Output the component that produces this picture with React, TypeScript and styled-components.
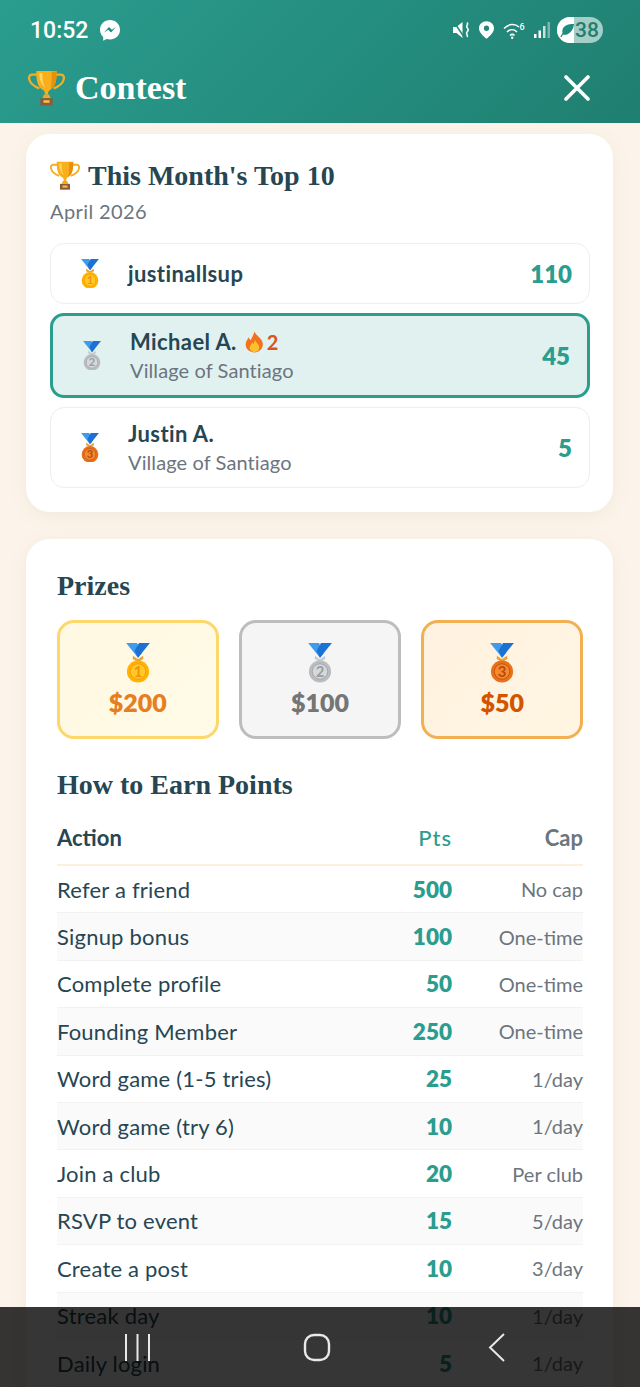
import React from "react";
import styled, { createGlobalStyle } from "styled-components";

const Global = createGlobalStyle`
  html, body { margin: 0; padding: 0; background: #fcf4ea; }
  * { box-sizing: border-box; }
`;
const BODY = `"Lato", "Noto Sans", sans-serif`;
const HEAD = `"Liberation Serif", serif`;

const Page = styled.div`
  position: relative; width: 640px; height: 1387px; overflow: hidden;
  background: #fcf4ea; font-family: ${BODY}; color: #264653;
`;
const Header = styled.header`
  height: 123px; background: linear-gradient(135deg, #2a9d8f 0%, #1f7f70 100%);
  color: #fff; display: flex; flex-direction: column;
`;
const StatusBar = styled.div`
  height: 60px; padding: 0 37px 0 30px; display: flex; align-items: center; justify-content: space-between;
`;
const Time = styled.div`
  display: flex; align-items: center; gap: 12px; font: 500 23px Roboto, sans-serif;
`;
const StatusIcons = styled.div`display: flex; align-items: center; gap: 9px;`;
const Battery = styled.div`
  width: 46px; height: 26px; margin-left: -3px; border-radius: 13px; overflow: hidden; display: flex;
  font: 500 21px/26px Roboto, sans-serif; color: #1f7f70; background: rgba(255,255,255,.6);
`;
const BatteryFill = styled.div`
  width: 17px; padding-left: 3px; background: #fff; display: flex; align-items: center;
`;
const BatteryText = styled.span`margin-left: 1px;`;
const TitleBar = styled.div`
  flex: 1; padding: 0 50px 7px 28px; display: flex; align-items: center; justify-content: space-between;
`;
const Title = styled.div`
  display: flex; align-items: center; gap: 10px; font: 700 34px ${HEAD};
`;
const Main = styled.main`
  padding: 11px 27px 0 26px; display: flex; flex-direction: column; gap: 27px;
`;
const Card = styled.section<{ $pad: string }>`
  background: #fff; border-radius: 24px; padding: ${p => p.$pad};
  box-shadow: 0 4px 20px rgba(120, 90, 60, .07);
`;
const CardTitle = styled.h2`
  margin: 0; height: 32px; display: flex; align-items: center; gap: 8px;
  font: 700 28px ${HEAD}; color: #264653;
`;
const DateLine = styled.div`
  margin: 6px 0 19px; font-size: 20px; line-height: 26px; color: #6c757d; letter-spacing: .4px;
`;
const Board = styled.div`display: flex; flex-direction: column; gap: 9px;`;
const BoardRow = styled.div<{ $me?: boolean; $h: number }>`
  height: ${p => p.$h}px; display: flex; align-items: center;
  padding: 0 17px 0 30px;
  border: ${p => p.$me ? "3px solid #2a9d8f" : "1px solid #eeeeee"};
  border-radius: 14px; background: ${p => p.$me ? "#e0f1f0" : "#fff"};
`;
const Who = styled.div`flex: 1; margin-left: 29px; display: flex; flex-direction: column;`;
const Name = styled.div`
  display: flex; align-items: center; font-weight: 700; font-size: 22px; line-height: 28px;
  color: #264653; letter-spacing: .4px;
`;
const Streak = styled.span`
  display: inline-flex; align-items: center; gap: 3px; margin-left: 8px; color: #d9531e; font-size: 20px; font-weight: 700;
`;
const Place = styled.div`font-size: 20px; line-height: 28px; color: #6c757d; letter-spacing: .1px;`;
const Score = styled.div`font-weight: 800; font-size: 24px; color: #2a9d8f;`;
const Heading = styled.h3<{ $mt: number }>`
  margin: ${p => p.$mt}px 0 0; height: 32px; display: flex; align-items: center;
  font: 700 28px ${HEAD}; color: #264653;
`;
const Prizes = styled.div`margin-top: 18px; display: grid; grid-template-columns: repeat(3, 1fr); gap: 20.5px;`;
const Prize = styled.div<{ $b: string; $bg: string; $c: string }>`
  height: 119px; border-radius: 17px; border: 3px solid ${p => p.$b}; background: ${p => p.$bg};
  color: ${p => p.$c}; display: flex; flex-direction: column; align-items: center;
  padding-top: 20px; font-size: 25px; font-weight: 800; line-height: 38px;
`;
const Table = styled.div`margin-top: 14px;`;
const TRow = styled.div<{ $alt?: boolean; $head?: boolean }>`
  display: grid; grid-template-columns: 1fr 100px 131px; align-items: center;
  height: ${p => p.$head ? 51 : 47.4}px;
  padding-bottom: ${p => p.$head ? 4 : 0}px;
  background: ${p => p.$alt ? "#fafafa" : "transparent"};
  border-bottom: ${p => p.$head ? "2px solid #fdf0dc" : "1px solid #f2f2f2"};
`;
const Action = styled.div<{ $head?: boolean }>`
  font-size: 22px; font-weight: ${p => p.$head ? 700 : 400}; color: #264653; white-space: nowrap;
  letter-spacing: ${p => p.$head ? 0 : .2}px;
`;
const Pts = styled.div<{ $head?: boolean }>`
  text-align: right; font-size: ${p => p.$head ? 22 : 22.5}px; font-weight: ${p => p.$head ? 500 : 800}; color: #2a9d8f;
  letter-spacing: ${p => p.$head ? 1 : 0}px;
`;
const Cap = styled.div<{ $head?: boolean }>`
  text-align: right; font-size: ${p => p.$head ? 22 : 20}px; font-weight: ${p => p.$head ? 700 : 400}; color: #6c757d;
`;
const NavBar = styled.nav`
  position: absolute; left: 0; right: 0; bottom: 0; height: 80px; background: rgba(0,0,0,.79);
  display: flex; align-items: center; color: #e8e8e8;
`;
const NavSlot = styled.div<{ $x: number }>`
  position: absolute; left: ${p => p.$x}px; top: 26px; height: 29px; display: flex;
`;

const Medal = ({ n, w }: { n: 1 | 2 | 3; w: number }) => {
  const c = {
    1: ["#ffb300", "#ffca28", "#f79009"],
    2: ["#b9bcc0", "#d6d8da", "#999ca1"],
    3: ["#e8701a", "#f58a2e", "#b84a0c"],
  }[n];
  return (
    <svg width={w} height={w * 1.65} viewBox="0 0 24 40" style={{ flex: "none" }}>
      <path d="M0 0h11l5 10-4 5z" fill="#3f9bec" />
      <path d="M24 0H13L8.500 8 12 15z" fill="#1c72d4" />
      <path d="M7 13l5 3.500L17 13l.5 3L13 19h-2l-4.500-3z" fill={n === 2 ? "#c9ccd0" : "#e8a33c"} />
      <circle cx="12" cy="28.800" r="11.200" fill={c[0]} />
      <circle cx="12" cy="28.800" r="7.800" fill={c[1]} stroke={c[2]} strokeWidth=".8" />
      <text x="12" y="34" textAnchor="middle" fontSize="15" fontWeight="700" fontFamily="Lato" fill={c[2]}>{n}</text>
    </svg>
  );
};

const Trophy = ({ w }: { w: number }) => (
  <svg width={w} height={w * 0.97} viewBox="0 0 36 35" style={{ flex: "none" }}>
    <path d="M9 4.500H4C1 4.500 .5 7 1.500 10c1 3.500 4.500 6 9.500 8M27 4.500h5c3 0 3.500 2.500 2.500 5.500-1 3.500-4.500 6-9.500 8" fill="none" stroke="#f3ae22" strokeWidth="2.200" />
    <path d="M8 1h20c0 10-1.500 16-6.500 18.500-1.500.8-2 1.800-2 4.500h-3c0-2.700-.5-3.700-2-4.500C9.500 17 8 11 8 1z" fill="#f9ae1b" />
    <path d="M11 3h3c0 6 .5 10 2.500 14-3.500-2.500-5.500-7-5.500-14z" fill="#ffd45e" />
    <path d="M23 1.500h5c0 9-1.500 15-6 17.500 1-5 1.200-11 1-17.500z" fill="#e88f0c" />
    <path d="M15.500 24h5l1.500 3.500h-8z" fill="#f0a91e" />
    <path d="M12 27.500h12v7H12z" fill="#8d5a3c" />
    <path d="M15 29.500h6v2.500h-6z" fill="#f5c24a" />
  </svg>
);

const Flame = () => (
  <svg width="19" height="22" viewBox="0 0 20 22" style={{ flex: "none" }}>
    <path d="M10 0c1 4 7 6 8.500 11.500C20 17 15.500 22 10 22S0 18 .8 12.500C1.300 9.500 3 8 4 6c.5 1.500 1 2.500 2 3C7.500 6 9 3.500 10 0z" fill="#f4721e" />
    <path d="M10.500 9c.5 2.500 4.500 4 4.500 8 0 2.500-2.300 4.500-5 4.500S5 19.500 5 17c0-2.500 2-3.500 2.500-5.500.7.700 1 1.200 1.500 1.500.5-1 1-2.500 1.500-4z" fill="#fbc02d" />
  </svg>
);

const rows: [string, string, string][] = [
  ["Refer a friend", "500", "No cap"], ["Signup bonus", "100", "One-time"],
  ["Complete profile", "50", "One-time"], ["Founding Member", "250", "One-time"],
  ["Word game (1-5 tries)", "25", "1/day"], ["Word game (try 6)", "10", "1/day"],
  ["Join a club", "20", "Per club"], ["RSVP to event", "15", "5/day"],
  ["Create a post", "10", "3/day"], ["Streak day", "10", "1/day"], ["Daily login", "5", "1/day"],
];

export default function App() {
  return (
    <Page>
      <Global />
      <Header>
        <StatusBar>
          <Time>
            10:52
            <svg width="20" height="21" viewBox="0 0 20 21">
              <path d="M10 0C4.500 0 0 4.100 0 9.700c0 2.900 1.200 5.500 3.200 7.300v3.800l3.400-1.900c1 .3 2.200.5 3.400.5 5.500 0 10-4.100 10-9.700S15.500 0 10 0z" fill="#fff" />
              <path d="M4 12.500l5-5.500 2.800 2.800L16 7l-5 5.500-2.800-2.800z" fill="#1f8c7d" />
            </svg>
          </Time>
          <StatusIcons>
            <svg width="17" height="18" viewBox="0 0 17 18">
              <path d="M0 6h3.500l6-5v16l-6-5H0z" fill="#fff" /><path d="M1 1l10 15" stroke="#228b7d" strokeWidth="1.500" />
              <path d="M14 1.500c2 2-1.500 3.500 0 5s1.500 3 0 4.500 1.500 3.500 0 5" fill="none" stroke="#fff" strokeWidth="1.600" />
            </svg>
            <svg width="15" height="18" viewBox="0 0 17 20">
              <path fillRule="evenodd" d="M8.500 0C3.800 0 0 3.500 0 8c0 5 5.500 9.500 8.500 12 3-2.500 8.500-7 8.500-12 0-4.500-3.800-8-8.500-8zm0 5a3 3 0 110 6 3 3 0 010-6z" fill="#fff" />
            </svg>
            <svg width="22" height="17" viewBox="0 0 22 17">
              <path d="M1 6.500C6 1.500 12 1.500 16 5M4 10c3-3 7-3 10 0M7 13.500c1.500-1.500 3-1.500 4.500 0" fill="none" stroke="#fff" strokeWidth="1.500" />
              <circle cx="9.200" cy="15.800" r="1.200" fill="#fff" />
              <text x="16.500" y="7.500" fontSize="9" fontWeight="500" fontFamily="Roboto" fill="#fff">6</text>
            </svg>
            <svg width="17" height="18" viewBox="0 0 17 18">
              <path d="M0 13h2.500v4H0z M4.500 9.500H7V17H4.500z" fill="#fff" /><path d="M9 5h2.500v12H9z" fill="#fff" opacity=".75" /><path d="M13.500 1H16v16h-2.500z" fill="#fff" opacity=".4" />
            </svg>
            <Battery>
              <BatteryFill>
                <svg width="15" height="15" viewBox="0 0 16 16" style={{ flex: "none" }}>
                  <path d="M15 1C8 1 3 3 2.500 8c-.2 2 .5 3.500 1 4.500C9 13 14 9 15 1z" fill="#1f8c7d" />
                  <path d="M1 15c1-3 3-6 8-8" stroke="#1f8c7d" strokeWidth="1.300" fill="none" />
                </svg>
              </BatteryFill>
              <BatteryText>38</BatteryText>
            </Battery>
          </StatusIcons>
        </StatusBar>
        <TitleBar>
          <Title><Trophy w={37} />Contest</Title>
          <svg width="26" height="26" viewBox="0 0 26 26">
            <path d="M2 2l22 22M24 2L2 24" stroke="#fff" strokeWidth="3.600" strokeLinecap="round" />
          </svg>
        </TitleBar>
      </Header>
      <Main>
        <Card $pad="26px 23px 24px 24px">
          <CardTitle><Trophy w={30} />This Month's Top 10</CardTitle>
          <DateLine>April 2026</DateLine>
          <Board>
            <BoardRow $h={61}>
              <Medal n={1} w={18} />
              <Who><Name>justinallsup</Name></Who>
              <Score>110</Score>
            </BoardRow>
            <BoardRow $me $h={85}>
              <Medal n={2} w={18} />
              <Who>
                <Name>Michael A.<Streak><Flame />2</Streak></Name>
                <Place>Village of Santiago</Place>
              </Who>
              <Score>45</Score>
            </BoardRow>
            <BoardRow $h={81}>
              <Medal n={3} w={18} />
              <Who>
                <Name>Justin A.</Name>
                <Place>Village of Santiago</Place>
              </Who>
              <Score>5</Score>
            </BoardRow>
          </Board>
        </Card>
        <Card $pad="31px 30px 40px 31px">
          <Heading $mt={0}>Prizes</Heading>
          <Prizes>
            <Prize $b="#fdd76a" $bg="linear-gradient(135deg,#fff8e3,#fffbe6)" $c="#e67e22">
              <Medal n={1} w={24} />$200
            </Prize>
            <Prize $b="#bdbdbd" $bg="#f5f5f5" $c="#757575">
              <Medal n={2} w={24} />$100
            </Prize>
            <Prize $b="#f2b053" $bg="linear-gradient(135deg,#fff2e0,#fff6e2)" $c="#d35400">
              <Medal n={3} w={24} />$50
            </Prize>
          </Prizes>
          <Heading $mt={30}>How to Earn Points</Heading>
          <Table>
            <TRow $head>
              <Action $head>Action</Action>
              <Pts $head>Pts</Pts>
              <Cap $head>Cap</Cap>
            </TRow>
            {rows.map((r, i) => (
              <TRow key={r[0]} $alt={i % 2 === 1}>
                <Action>{r[0]}</Action>
                <Pts>{r[1]}</Pts>
                <Cap>{r[2]}</Cap>
              </TRow>
            ))}
          </Table>
        </Card>
      </Main>
      <NavBar>
        <NavSlot $x={124}>
          <svg width="28" height="29" viewBox="0 0 28 29">
            <path d="M2 1v27M13.500 1v27M25 1v27" stroke="#e8e8e8" strokeWidth="2" />
          </svg>
        </NavSlot>
        <NavSlot $x={303}>
          <svg width="28" height="29" viewBox="0 0 28 29">
            <rect x="2" y="2" width="24" height="25" rx="9" fill="none" stroke="#e8e8e8" strokeWidth="2.400" />
          </svg>
        </NavSlot>
        <NavSlot $x={487}>
          <svg width="20" height="29" viewBox="0 0 20 29">
            <path d="M17 1L3 14.500 17 28" fill="none" stroke="#e8e8e8" strokeWidth="2" />
          </svg>
        </NavSlot>
      </NavBar>
    </Page>
  );
}
